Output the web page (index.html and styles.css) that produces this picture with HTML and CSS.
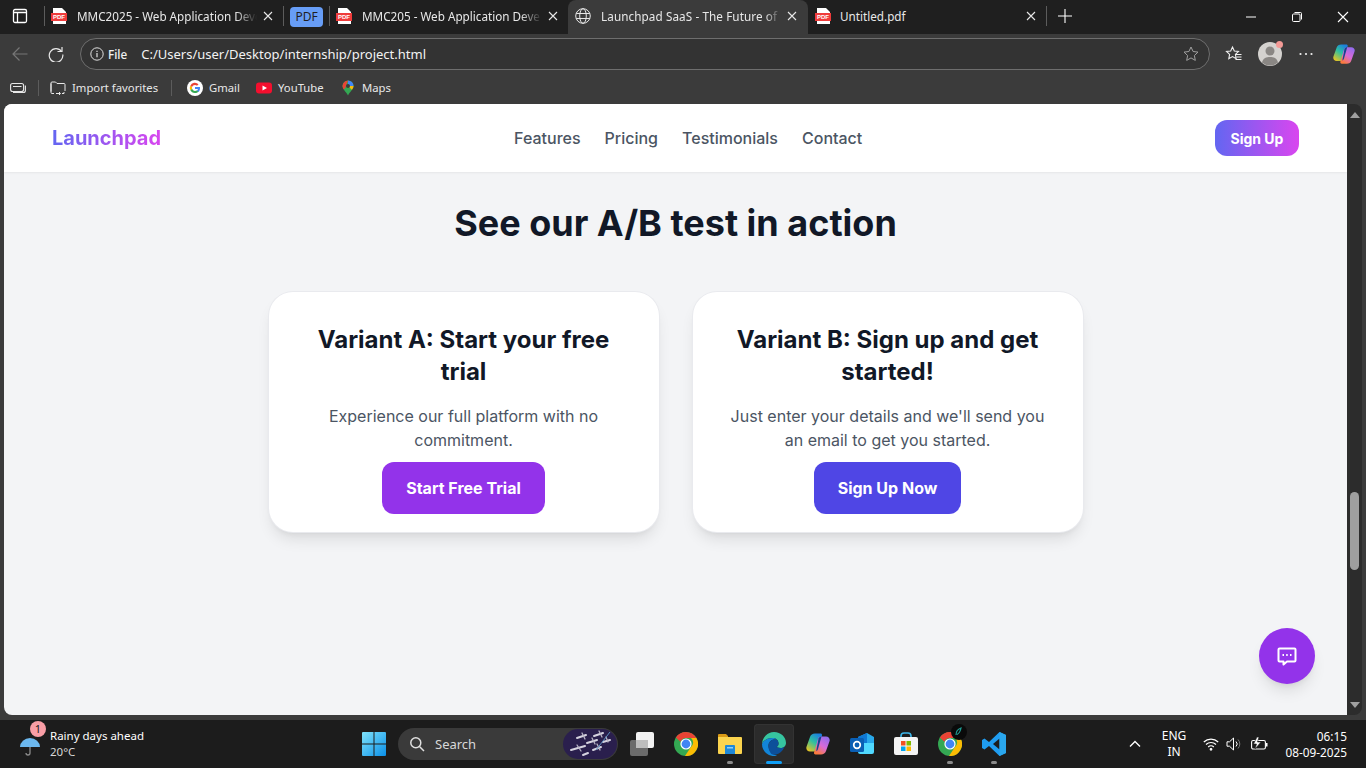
FILE: index.html
```html
<!DOCTYPE html>
<html lang="en">
<head>
    <meta charset="UTF-8">
    <meta name="viewport" content="width=device-width, initial-scale=1.0">
    <title>Launchpad SaaS - The Future of Productivity</title>
    <link rel="stylesheet" href="styles.css">
</head>
<body>
<svg class="defs" width="0" height="0">
    <defs>
        <linearGradient id="cop-a" x1="0.7" y1="0" x2="0.1" y2="1"><stop offset="0" stop-color="#1b7fe0"/><stop offset="0.45" stop-color="#2fc0a0"/><stop offset="1" stop-color="#f5c518"/></linearGradient>
        <linearGradient id="cop-b" x1="0.9" y1="0" x2="0.3" y2="1"><stop offset="0" stop-color="#8a6cf0"/><stop offset="0.55" stop-color="#d86ad8"/><stop offset="1" stop-color="#fb7a3c"/></linearGradient>
    </defs>
    <symbol id="pdf" viewBox="0 0 16 16">
        <path d="M2 0h9l4 4v12H2z" fill="#fff"/>
        <rect x="0" y="5" width="16" height="8" fill="#ef3b3b"/>
        <text x="8" y="11.4" font-size="6" font-weight="700" fill="#fff" text-anchor="middle" font-family="Liberation Sans, sans-serif">PDF</text>
    </symbol>
    <symbol id="close" viewBox="0 0 10 10">
        <path d="M1 1l8 8M9 1l-8 8" stroke="#e8e8e8" stroke-width="1.1" fill="none"/>
    </symbol>
    <symbol id="chrome" viewBox="0 0 24 24">
        <circle cx="12" cy="12" r="12" fill="#34a853"/>
        <path d="M12 0a12 12 0 0 1 10.4 6H12a6 6 0 0 0-5.6 3.8L1.9 5.5A12 12 0 0 1 12 0z" fill="#ea4335"/>
        <path d="M22.4 6A12 12 0 0 1 11 24l5.6-8.5A6 6 0 0 0 17 6z" fill="#fbbc04"/>
        <circle cx="12" cy="12" r="5.6" fill="#fff"/>
        <circle cx="12" cy="12" r="4.4" fill="#4285f4"/>
    </symbol>
    <symbol id="copilot" viewBox="0 0 24 24">
        <path d="M9 1.500h5.500c1.200 0 1.800 1 1.400 2.200L12 17c-.5 1.800-1.700 2.500-3.500 2.500H4c-2.700 0-4.300-2.300-3.500-4.800L4 5c.7-2.300 2.500-3.500 5-3.500z" fill="url(#cop-a)"/>
        <path d="M15.500 4.500H20c2.700 0 4.300 2.300 3.500 4.800L20 19c-.7 2.300-2.500 3.500-5 3.500H9.500c-1.200 0-1.800-1-1.400-2.200L12 7c.5-1.800 1.700-2.500 3.500-2.500z" fill="url(#cop-b)"/>
        <path d="M12.500 6.500c.6-1.300 1.500-2 3-2L12 17c-.4 1.200-1 1.800-1.800 2.200z" fill="#17448f"/>
    </symbol>
</svg>

<div class="tabstrip">
    <svg class="sidebar-icon" width="16" height="16" viewBox="0 0 16 16"><rect x="1.500" y="1.500" width="13" height="13" rx="1.500" fill="none" stroke="#fff" stroke-width="1.300"/><path d="M1.500 4.500h13M5.500 4.500V14" stroke="#fff" stroke-width="1.300"/></svg>
    <span class="tab-sep sep-first"></span>
    <div class="tab tab-a">
        <svg class="tab-icon" width="16" height="16"><use href="#pdf"/></svg>
        <span class="tab-title">MMC2025 - Web Application Deve</span>
        <svg class="tab-close" width="10" height="10"><use href="#close"/></svg>
    </div>
    <span class="tab-sep"></span>
    <span class="pdf-group">PDF</span>
    <span class="tab-sep"></span>
    <div class="tab tab-b">
        <svg class="tab-icon" width="16" height="16"><use href="#pdf"/></svg>
        <span class="tab-title">MMC205 - Web Application Deve</span>
        <svg class="tab-close" width="10" height="10"><use href="#close"/></svg>
    </div>
    <div class="tab tab-active">
        <svg class="tab-icon" width="16" height="16" viewBox="0 0 16 16" fill="none" stroke="#e6e6e6" stroke-width="1"><circle cx="8" cy="8" r="7.300"/><ellipse cx="8" cy="8" rx="3.300" ry="7.300"/><path d="M1.200 5.500h13.600M1.200 10.500h13.600"/></svg>
        <span class="tab-title">Launchpad SaaS - The Future of P</span>
        <svg class="tab-close" width="10" height="10"><use href="#close"/></svg>
    </div>
    <div class="tab tab-c">
        <svg class="tab-icon" width="16" height="16"><use href="#pdf"/></svg>
        <span class="tab-title">Untitled.pdf</span>
        <svg class="tab-close" width="10" height="10"><use href="#close"/></svg>
    </div>
    <span class="tab-sep"></span>
    <svg class="new-tab" width="16" height="16" viewBox="0 0 16 16"><path d="M8 1v14M1 8h14" stroke="#fff" stroke-width="1.100"/></svg>
    <div class="window-controls">
        <svg width="12" height="12" viewBox="0 0 12 12"><path d="M1 6h10" stroke="#fff" stroke-width="1"/></svg>
        <svg width="12" height="12" viewBox="0 0 12 12" fill="none" stroke="#fff" stroke-width="1"><rect x="1.500" y="3" width="7.500" height="7.500" rx="1"/><path d="M3.500 1.500h6a1 1 0 0 1 1 1v6"/></svg>
        <svg width="12" height="12" viewBox="0 0 12 12"><path d="M1 1l10 10M11 1L1 11" stroke="#fff" stroke-width="1.100"/></svg>
    </div>
</div>

<div class="toolbar">
    <svg class="tool-back" width="16" height="16" viewBox="0 0 16 16" fill="none" stroke="#767676" stroke-width="1.200"><path d="M15.500 8H1M7.500 1.500L1 8l6.500 6.500"/></svg>
    <svg class="tool-reload" width="16" height="16" viewBox="0 0 16 16" fill="none" stroke="#e8e8e8" stroke-width="1.200"><path d="M13.600 5.500A6.800 6.800 0 1 0 14.800 8.500"/><path d="M14 1v4.500H9.500"/></svg>
    <div class="address">
        <svg width="16" height="16" viewBox="0 0 16 16" fill="none" stroke="#e0e0e0" stroke-width="1"><circle cx="8" cy="8" r="6.200"/><path d="M8 7v4.200M8 4.700v1.200" stroke-width="1.200"/></svg>
        <span class="address-file">File</span>
        <span class="address-url">C:/Users/user/Desktop/internship/project.html</span>
        <svg class="address-star" width="16" height="16" viewBox="0 0 16 16" fill="none" stroke="#a0a0a0" stroke-width="1"><path d="M8 1l2.100 4.500 4.900.6-3.600 3.400.9 4.900L8 11.900l-4.300 2.500.9-4.900L1 6.100l4.900-.6z"/></svg>
    </div>
    <svg class="tool-favs" width="18" height="18" viewBox="0 0 18 18" fill="none" stroke="#f0f0f0" stroke-width="1.100"><path d="M7.500 2l1.800 4 4.200.5-3.100 2.900.8 4.300-3.700-2.100-3.700 2.100.8-4.300L1.500 6.500 5.700 6z"/><path d="M11 9.500h5.500M11.500 12h5M10.500 14.500h6"/></svg>
    <div class="avatar">
        <svg width="24" height="24" viewBox="0 0 24 24"><circle cx="12" cy="12" r="12" fill="#d4d2cf"/><circle cx="12" cy="9" r="4.500" fill="#8a8784"/><path d="M4 20.500C5 16 8.500 15 12 15s7 1 8 5.500A12 12 0 0 1 4 20.500z" fill="#8a8784"/></svg>
        <span class="avatar-dot"></span>
    </div>
    <svg class="tool-more" width="16" height="4" viewBox="0 0 16 4" fill="#f0f0f0"><circle cx="2.500" cy="2" r="1.100"/><circle cx="8" cy="2" r="1.100"/><circle cx="13.500" cy="2" r="1.100"/></svg>
    <svg class="tool-copilot" width="22" height="22"><use href="#copilot"/></svg>
</div>

<div class="bookmarks">
    <svg width="16" height="16" viewBox="0 0 16 16" fill="none" stroke="#e8e8e8" stroke-width="1.100"><rect x=".6" y="3.500" width="13" height="8" rx="2"/><path d="M3 6.500h8.500M15.400 5.500v5a2 2 0 0 1-2 2H3"/></svg>
    <span class="bm-sep bm-sep-first"></span>
    <div class="bm bm-import">
        <svg width="16" height="16" viewBox="0 0 16 16" fill="none" stroke="#e8e8e8" stroke-width="1"><path d="M1 11.500V3a1 1 0 0 1 1-1h3.500l1.500 1.500h7a1 1 0 0 1 1 1V11"/><path d="M1 3.500v9a1 1 0 0 0 1 1h2M6 13.500h4M9 12l1.500 1.500L9 15M14 12v1.500h-2"/></svg>
        <span>Import favorites</span>
    </div>
    <span class="bm-sep"></span>
    <div class="bm bm-gmail">
        <svg width="16" height="16" viewBox="0 0 16 16"><circle cx="8" cy="8" r="8" fill="#fff"/><path d="M13 8.100c0-.4 0-.7-.1-1H8v2h2.900a2.400 2.400 0 0 1-1.100 1.600l1.700 1.300c1-.9 1.500-2.200 1.500-3.900z" fill="#4285f4"/><path d="M8 13c1.400 0 2.600-.5 3.500-1.300l-1.700-1.300c-.5.300-1.100.5-1.800.5-1.400 0-2.500-.9-2.900-2.100L3.300 10.100A5 5 0 0 0 8 13z" fill="#34a853"/><path d="M5.100 8.800a3 3 0 0 1 0-1.700L3.300 5.800a5 5 0 0 0 0 4.400z" fill="#fbbc05"/><path d="M8 5c.8 0 1.500.3 2 .8l1.500-1.500A5 5 0 0 0 3.300 5.800l1.800 1.300C5.500 5.900 6.600 5 8 5z" fill="#ea4335"/></svg>
        <span>Gmail</span>
    </div>
    <div class="bm bm-youtube">
        <svg width="16" height="16" viewBox="0 0 16 16"><rect y="2.500" width="16" height="11" rx="3" fill="#f40f2e"/><path d="M6.500 5.500L11 8l-4.500 2.500z" fill="#fff"/></svg>
        <span>YouTube</span>
    </div>
    <div class="bm bm-maps">
        <svg width="16" height="16" viewBox="0 0 16 16"><path d="M8 .5a5.500 5.500 0 0 0-5.500 5.500c0 3.500 3.500 5.500 5.500 9.500 2-4 5.500-6 5.500-9.500A5.500 5.500 0 0 0 8 .5z" fill="#34a853"/><path d="M3.300 3.200A5.500 5.500 0 0 1 8 .5L5 8.500l-1.700 .5A5.500 5.500 0 0 1 3.300 3.200z" fill="#ea4335"/><path d="M8 .5a5.500 5.500 0 0 1 5.500 5.500L8 6z" fill="#4285f4"/><path d="M13.500 6c0 1.500-.8 2.700-1.700 3.800L8 6z" fill="#fbbc05"/><circle cx="8" cy="6" r="2" fill="#3b3b3b"/></svg>
        <span>Maps</span>
    </div>
</div>

<div class="viewport-row">
    <div class="viewport">
        <nav class="nav">
            <a class="logo">Launchpad</a>
            <div class="nav-links">
                <a>Features</a>
                <a>Pricing</a>
                <a>Testimonials</a>
                <a>Contact</a>
            </div>
            <button class="nav-signup">Sign Up</button>
        </nav>
        <main class="ab-section">
            <h2>See our A/B test in action</h2>
            <div class="ab-cards">
                <div class="ab-card">
                    <h3>Variant A: Start your free trial</h3>
                    <p>Experience our full platform with no commitment.</p>
                    <button class="cta cta-purple">Start Free Trial</button>
                </div>
                <div class="ab-card">
                    <h3>Variant B: Sign up and get started!</h3>
                    <p>Just enter your details and we'll send you an email to get you started.</p>
                    <button class="cta cta-indigo">Sign Up Now</button>
                </div>
            </div>
        </main>
        <button class="chat-fab" aria-label="Chat">
            <svg width="24" height="24" viewBox="0 0 24 24" fill="none" stroke="#fff" stroke-width="2"><path d="M4.500 4.500h15a1 1 0 0 1 1 1v11a1 1 0 0 1-1 1H12l-3.500 3v-3h-4a1 1 0 0 1-1-1v-11a1 1 0 0 1 1-1z" stroke-linejoin="round"/><path d="M7.500 11h1.500M11.200 11h1.500M15 11h1.500"/></svg>
        </button>
    </div>
    <div class="scrollbar">
        <span class="arrow-up"></span>
        <span class="thumb"></span>
        <span class="arrow-down"></span>
    </div>
</div>

<footer class="taskbar">
    <div class="weather">
        <svg class="weather-icon" width="22" height="24" viewBox="0 0 22 24"><path d="M1 15a10 9 0 0 1 20 0z" fill="#6cb8ef"/><path d="M11 15v6a2 2 0 0 1-4 0" fill="none" stroke="#8a8a8a" stroke-width="1.300"/></svg>
        <span class="weather-badge">1</span>
        <div class="weather-text">
            <span>Rainy days ahead</span>
            <span class="weather-temp">20&deg;C</span>
        </div>
    </div>
    <svg class="start" width="24" height="24" viewBox="0 0 24 24">
        <defs><linearGradient id="win" x1="0" y1="0" x2="1" y2="1"><stop offset="0" stop-color="#7fe3fb"/><stop offset="1" stop-color="#0a8fe8"/></linearGradient></defs>
        <path d="M0 1a1 1 0 0 1 1-1h10.500v11.500H0zM12.500 0H23a1 1 0 0 1 1 1v10.500H12.500zM0 12.500h11.500V24H1a1 1 0 0 1-1-1zM12.500 12.500H24V23a1 1 0 0 1-1 1H12.500z" fill="url(#win)"/>
    </svg>
    <div class="search">
        <svg width="16" height="16" viewBox="0 0 16 16" fill="none" stroke="#e0e0e0" stroke-width="1.500"><circle cx="6.800" cy="6.800" r="5"/><path d="M10.500 10.500l4.500 4.500"/></svg>
        <span class="search-label">Search</span>
        <svg class="search-art" width="54" height="30" viewBox="0 0 54 30">
            <rect width="54" height="30" rx="15" fill="#2a1f4d"/>
            <g stroke="#d6d3df" stroke-width="2" stroke-linecap="round">
                <path d="M8 21l14-4M14 9l9-3M24 14l10-3M31 7l9-3M30 21l8-3M40 13l7-2M20 26l5-2"/>
            </g>
            <g stroke="#b9b5c6" stroke-width="1.300" stroke-linecap="round">
                <path d="M14 16l4 6M19 4l3 6M29 9l3 6M36 2l3 6M34 15l3 6M43 8l2 5"/>
            </g>
            <path d="M33 21L47 3" stroke="#5b8fc0" stroke-width="1"/>
        </svg>
    </div>
    <div class="task-icons">
        <div class="task-item">
            <svg width="24" height="24" viewBox="0 0 24 24"><rect y="8" width="18" height="16" rx="2" fill="#6b6b6b"/><rect x="6" y="0" width="18" height="16" rx="2" fill="#f2f2f2"/><rect x="6" y="8" width="12" height="8" fill="#bdbdbd"/></svg>
        </div>
        <div class="task-item">
            <svg width="24" height="24"><use href="#chrome"/></svg>
        </div>
        <div class="task-item task-open">
            <svg width="24" height="24" viewBox="0 0 24 24"><path d="M0 3a1 1 0 0 1 1-1h7l2 2v4H0z" fill="#d99a16"/><path d="M0 5h23a1 1 0 0 1 1 1v15a1 1 0 0 1-1 1H1a1 1 0 0 1-1-1z" fill="#fbd44e"/><path d="M7 14a1 1 0 0 1 1-1h8a1 1 0 0 1 1 1v8H7z" fill="#1e88d8"/><rect x="9" y="15" width="6" height="1.500" fill="#8ed0f5"/></svg>
        </div>
        <div class="task-item task-active">
            <svg width="24" height="24" viewBox="0 0 24 24"><path d="M12 0c7 0 12 5 12 11 0 3-2.500 5-5.500 5-2.500 0-4-1-4-1 1.500-1 2-2 2-3.500C16.500 8 14 6 10.500 6 5 6 1 9 0 12 .5 5 5.500 0 12 0z" fill="#36c5a0"/><path d="M0 12c1-3 5-6 10.500-6 2 0 3.500.7 4.500 1.700-4-1-8 1-8.500 5.300-.4 4 2.500 9.500 8.500 10.700A12 12 0 0 1 0 12z" fill="#1285d8"/><path d="M6.500 13c.5-4.300 4.500-6.300 8.500-5.300 1 .9 1.500 2.300 1.500 3.800 0 1.500-.5 2.500-2 3.500 0 0 1.500 1 4 1 1.500 0 3-.5 4-1.500-1.500 4.500-5.500 8-10 8.200-.6 0-1.300 0-2-.1-2.800-1.500-4.400-6-4-9.600z" fill="#0c4f9a"/></svg>
            <span class="task-active-bar"></span>
        </div>
        <div class="task-item">
            <svg width="24" height="24"><use href="#copilot"/></svg>
        </div>
        <div class="task-item">
            <svg width="24" height="24" viewBox="0 0 24 24"><path d="M8 5l9-4 7 4v13a2 2 0 0 1-2 2H10a2 2 0 0 1-2-2z" fill="#28a8ea"/><path d="M8 11h16v9a2 2 0 0 1-2 2H10a2 2 0 0 1-2-2z" fill="#50d9ff"/><path d="M8 5l9-4v10H8z" fill="#0f78d4"/><rect y="6" width="14" height="14" rx="1.500" fill="#0a5fb4"/><circle cx="7" cy="13" r="3.300" fill="none" stroke="#fff" stroke-width="1.700"/></svg>
        </div>
        <div class="task-item">
            <svg width="24" height="24" viewBox="0 0 24 24"><path d="M7 6V4a3 3 0 0 1 3-3h4a3 3 0 0 1 3 3v2" fill="none" stroke="#3cb6ea" stroke-width="1.600"/><rect y="5" width="24" height="18" rx="2" fill="#f4f4f4"/><rect x="7" y="9" width="4.500" height="4.500" fill="#f25022"/><rect x="12.500" y="9" width="4.500" height="4.500" fill="#7fba00"/><rect x="7" y="14.500" width="4.500" height="4.500" fill="#00a4ef"/><rect x="12.500" y="14.500" width="4.500" height="4.500" fill="#ffb900"/></svg>
        </div>
        <div class="task-item task-open chrome-profile">
            <svg width="24" height="24"><use href="#chrome"/></svg>
            <svg class="chrome-badge" width="16" height="16" viewBox="0 0 16 16"><circle cx="8" cy="8" r="8" fill="#0a0a0a"/><path d="M5 11c0-3 2-6 5-7-.5 3-2 5.500-4 6.500" fill="none" stroke="#1f9d94" stroke-width="1.200"/></svg>
        </div>
        <div class="task-item task-open">
            <svg width="24" height="24" viewBox="0 0 24 24"><path d="M17.500 0L24 3v18l-6.500 3L7 14l-4.500 3.500L0 16V8l2.500-1.500L7 10z" fill="#1f9cf0"/><path d="M17.500 6.500L11 12l6.500 5.500z" fill="#1c1c1c"/><path d="M17.500 0L24 3v18l-6.500 3z" fill="#2aa7ee"/></svg>
        </div>
    </div>
    <div class="tray">
        <svg class="tray-chevron" width="12" height="8" viewBox="0 0 12 8"><path d="M1 6.500l5-5 5 5" fill="none" stroke="#fff" stroke-width="1.400"/></svg>
        <div class="tray-lang"><span>ENG</span><span>IN</span></div>
        <svg class="tray-wifi" width="16" height="14" viewBox="0 0 16 14" fill="none" stroke="#fff" stroke-width="1.200"><path d="M.8 5a10.500 10.500 0 0 1 14.400 0M3 7.500a7.200 7.200 0 0 1 10 0M5.200 10a4 4 0 0 1 5.600 0"/><circle cx="8" cy="12.300" r=".8" fill="#fff"/></svg>
        <svg class="tray-sound" width="16" height="14" viewBox="0 0 16 14" fill="none" stroke="#fff" stroke-width="1"><path d="M1 4.800h2.500L7.500 1v12L3.500 9.200H1z"/><path d="M10 4.500a3.500 3.500 0 0 1 0 5"/><path d="M12 2.500a6.500 6.500 0 0 1 0 9" stroke="#777"/></svg>
        <svg class="tray-battery" width="17" height="14" viewBox="0 0 17 14"><rect x=".6" y="3.500" width="13.800" height="8.500" rx="1.500" fill="none" stroke="#fff" stroke-width="1.100"/><rect x="15" y="6" width="1.500" height="3.500" fill="#fff"/><path d="M6 0L2.500 7h3L4 12l6-7H6.500L8 0z" fill="#fff" stroke="#1c1c1c" stroke-width=".6"/></svg>
        <div class="tray-clock"><span>06:15</span><span>08-09-2025</span></div>
    </div>
</footer>
</body>
</html>
```

FILE: styles.css
```css
* {
    box-sizing: border-box;
}

html, body {
    height: 100%;
}

body {
    margin: 0;
    width: 1366px;
    height: 768px;
    overflow: hidden;
    display: flex;
    flex-direction: column;
    background-color: #3b3b3b;
    font-family: "Noto Sans", "Open Sans", sans-serif;
    color: #fff;
}

.defs {
    position: absolute;
}

svg {
    flex-shrink: 0;
    display: block;
}

/* tab strip */
.tabstrip {
    height: 34px;
    display: flex;
    align-items: center;
    background-color: #1f1f1f;
    font-size: 11.7px;
}

.sidebar-icon {
    margin-left: 12px;
    margin-bottom: 2px;
}

.tab-sep {
    width: 1px;
    height: 20px;
    margin-bottom: 2px;
    background-color: #5c5c5c;
}

.sep-first {
    margin-left: 16px;
}

.tab {
    display: flex;
    align-items: center;
    height: 34px;
    color: #e8e8e8;
}

.tab-a, .tab-b {
    width: 238px;
    padding: 0 10px 2px 6px;
}

.tab-active {
    width: 240px;
    padding: 0 11px 2px 7px;
    background-color: #3b3b3b;
    border-radius: 8px 8px 0 0;
}

.tab-c {
    width: 238px;
    padding: 0 10px 2px 7px;
}

.tab-title {
    flex: 1;
    margin-left: 10px;
    margin-right: 6px;
    white-space: nowrap;
    overflow: hidden;
    -webkit-mask-image: linear-gradient(to right, #000 88%, transparent 100%);
    mask-image: linear-gradient(to right, #000 88%, transparent 100%);
}

.tab-active .tab-title {
    letter-spacing: 0.1px;
    -webkit-mask-image: linear-gradient(to right, #000 91%, transparent 100%);
    mask-image: linear-gradient(to right, #000 91%, transparent 100%);
}

.tab-c .tab-title {
    margin-left: 9px;
    -webkit-mask-image: none;
    mask-image: none;
}

.pdf-group {
    width: 33px;
    height: 20px;
    margin: 0 6px;
    border-radius: 4px;
    background-color: #679df6;
    color: #1f1f1f;
    font-size: 12px;
    line-height: 20px;
    text-align: center;
}

.new-tab {
    margin-left: 10px;
    margin-bottom: 2px;
}

.window-controls {
    margin-left: auto;
    display: flex;
    align-items: center;
    gap: 34px;
    padding-right: 17px;
}

/* address bar row */
.toolbar {
    height: 38px;
    padding-top: 2px;
    display: flex;
    align-items: center;
    background-color: #3b3b3b;
}

.tool-back {
    margin-left: 12px;
}

.tool-reload {
    margin-left: 20px;
}

.address {
    width: 1130px;
    height: 32px;
    margin-left: 16px;
    padding: 0 10px 0 8px;
    display: flex;
    align-items: center;
    background-color: #333;
    border: 1px solid #6e6e6e;
    border-radius: 16px;
    font-size: 13px;
}

.address-file {
    margin-left: 3px;
    font-size: 11.7px;
    font-weight: 500;
    color: #f0f0f0;
}

.address-url {
    margin-left: 14px;
    color: #f2f2f2;
}

.address-star {
    margin-left: auto;
}

.tool-favs {
    margin-left: 15px;
}

.avatar {
    position: relative;
    margin-left: 15px;
}

.avatar-dot {
    position: absolute;
    top: -1px;
    right: -1px;
    width: 7px;
    height: 7px;
    border-radius: 50%;
    background-color: #f39a96;
}

.tool-more {
    margin-left: 16px;
}

.tool-copilot {
    margin-left: 19px;
}

/* favorites bar */
.bookmarks {
    height: 32px;
    padding-left: 10px;
    display: flex;
    align-items: center;
    background-color: #3b3b3b;
    font-size: 11.3px;
    color: #e8e8e8;
}

.bm {
    display: flex;
    align-items: center;
    gap: 6px;
    white-space: nowrap;
}

.bm span {
    margin-bottom: 2px;
}

.bm-sep {
    width: 1px;
    height: 16px;
    background-color: #5c5c5c;
}

.bm-sep-first {
    margin-left: 12px;
}

.bm-import {
    margin-left: 11px;
    width: 121px;
}

.bm-gmail {
    margin-left: 15px;
    width: 69px;
}

.bm-youtube {
    width: 84px;
}

/* page */
.viewport-row {
    height: 611px;
    display: flex;
    padding-left: 4px;
}

.viewport {
    position: relative;
    width: 1343px;
    background-color: #f3f4f6;
    border-radius: 8px 0 0 8px;
    overflow: hidden;
    font-family: Inter, sans-serif;
}

.nav {
    height: 68px;
    padding: 0 48px;
    display: flex;
    align-items: center;
    background-color: #fff;
    box-shadow: 0 1px 2px rgba(0, 0, 0, 0.06);
}

.logo {
    font-size: 20px;
    font-weight: 700;
    background: linear-gradient(90deg, #6366f1, #d946ef);
    -webkit-background-clip: text;
    background-clip: text;
    color: transparent;
}

.nav-links {
    display: flex;
    gap: 24px;
    margin-left: 353px;
    margin-right: auto;
    font-size: 16px;
    font-weight: 500;
    color: #4b5563;
}

.nav-signup {
    width: 84px;
    height: 36px;
    padding: 0;
    border: none;
    border-radius: 12px;
    background: linear-gradient(90deg, #6366f1, #d946ef);
    color: #fff;
    font-family: inherit;
    font-size: 14px;
    font-weight: 700;
}

.ab-section {
    padding-top: 31px;
    text-align: center;
}

.ab-section h2 {
    margin: 0 0 49px;
    font-size: 36px;
    line-height: 40px;
    font-weight: 700;
    color: #111827;
}

.ab-cards {
    display: flex;
    justify-content: center;
    gap: 34px;
    margin-left: 1px;
}

.ab-card {
    width: 390px;
    height: 240px;
    padding: 32px 33px 0 32px;
    background-color: #fff;
    border-radius: 24px;
    box-shadow: 0 0 0 1px #e9eaee, 0 10px 15px -3px rgba(0, 0, 0, 0.1), 0 4px 6px -4px rgba(0, 0, 0, 0.1);
}

.ab-card h3 {
    margin: 0 0 16px;
    font-size: 24px;
    line-height: 32px;
    font-weight: 700;
    color: #111827;
}

.ab-card p {
    margin: 0 0 10px;
    font-size: 16px;
    line-height: 24px;
    color: #4b5563;
}

.cta {
    height: 52px;
    padding: 0 24px;
    border: none;
    border-radius: 12px;
    color: #fff;
    font-family: inherit;
    font-size: 16px;
    font-weight: 700;
}

.cta-purple {
    background-color: #9333ea;
}

.cta-indigo {
    background-color: #4f46e5;
}

.chat-fab {
    position: absolute;
    right: 32px;
    bottom: 31px;
    width: 56px;
    height: 56px;
    padding: 0;
    display: flex;
    align-items: center;
    justify-content: center;
    border: none;
    border-radius: 50%;
    background-color: #9333ea;
    box-shadow: 0 10px 15px -3px rgba(0, 0, 0, 0.1), 0 4px 6px -4px rgba(0, 0, 0, 0.1);
}

.scrollbar {
    width: 15px;
    display: flex;
    flex-direction: column;
    align-items: center;
    background-color: #2c2c2c;
    border-radius: 0 8px 8px 0;
    padding: 8px 0 7px;
}

.arrow-up {
    width: 0;
    height: 0;
    border-left: 5px solid transparent;
    border-right: 5px solid transparent;
    border-bottom: 6px solid #a0a0a0;
}

.thumb {
    width: 9px;
    height: 78px;
    margin-top: 374px;
    border-radius: 5px;
    background-color: #9f9f9f;
}

.arrow-down {
    margin-top: auto;
    width: 0;
    height: 0;
    border-left: 5px solid transparent;
    border-right: 5px solid transparent;
    border-top: 6px solid #a0a0a0;
}

/* windows taskbar */
.taskbar {
    height: 48px;
    margin-top: 5px;
    display: flex;
    align-items: center;
    background-color: #1c1c1c;
    font-size: 11.5px;
}

.weather {
    position: relative;
    width: 362px;
    padding-left: 19px;
    display: flex;
    align-items: center;
}

.weather-badge {
    position: absolute;
    left: 30px;
    top: -7px;
    width: 16px;
    height: 16px;
    border-radius: 50%;
    background-color: #f99ea6;
    color: #1c1c1c;
    font-size: 11px;
    line-height: 16px;
    text-align: center;
}

.weather-text {
    margin-left: 9px;
    display: flex;
    flex-direction: column;
    line-height: 16px;
}

.weather-temp {
    color: #d8d8d8;
}

.search {
    width: 220px;
    height: 32px;
    margin-left: 12px;
    padding: 0 1px 0 11px;
    display: flex;
    align-items: center;
    background-color: #3a3a3a;
    border-radius: 16px;
    font-size: 13px;
    color: #d8d8d8;
}

.search-label {
    margin-left: 10px;
}

.search-art {
    margin-left: auto;
}

.task-icons {
    margin-left: 2px;
    display: flex;
    align-items: center;
}

.task-item {
    position: relative;
    width: 44px;
    height: 40px;
    display: flex;
    align-items: center;
    justify-content: center;
    border-radius: 4px;
}

.task-active {
    width: 40px;
    margin: 0 2px;
    background-color: #2b2b2b;
    box-shadow: inset 0 0 0 1px #333;
}

.task-open::after {
    content: "";
    position: absolute;
    left: 19px;
    bottom: 0;
    width: 6px;
    height: 3px;
    border-radius: 2px;
    background-color: #8c8c8c;
}

.task-active-bar {
    position: absolute;
    left: 12px;
    bottom: 0;
    width: 16px;
    height: 3px;
    border-radius: 2px;
    background-color: #0f9ef5;
}

.chrome-badge {
    position: absolute;
    top: 0;
    right: 5px;
}

.tray {
    margin-left: auto;
    padding-right: 19px;
    display: flex;
    align-items: center;
}

.tray-lang {
    width: 36px;
    margin-left: 15px;
    display: flex;
    flex-direction: column;
    align-items: center;
    line-height: 16px;
    font-size: 12px;
}

.tray-wifi {
    margin-left: 11px;
}

.tray-sound {
    margin-left: 7px;
}

.tray-battery {
    margin-left: 9px;
}

.tray-clock {
    width: 70px;
    margin-left: 9px;
    display: flex;
    flex-direction: column;
    align-items: flex-end;
    line-height: 16px;
    font-size: 11.8px;
}
```
